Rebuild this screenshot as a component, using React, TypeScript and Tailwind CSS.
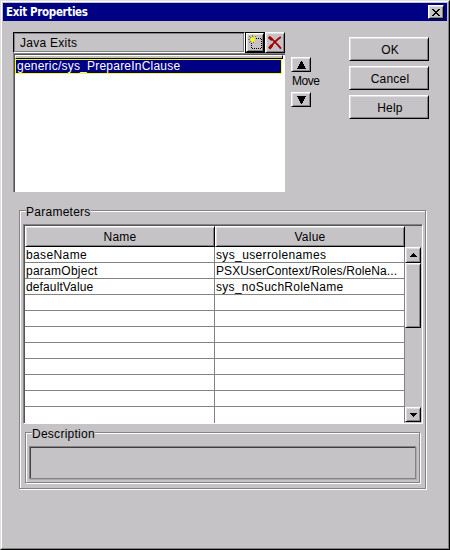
import type { ReactNode } from "react";

const raised =
  "bg-[#c6c3c6] border border-t-white border-l-white border-r-black border-b-black shadow-[inset_1px_1px_0_#dedfde,inset_-1px_-1px_0_#848284]";

const arrowRows = {
  sm: [1, 3, 5, 7],
  lg: [1, 3, 3, 5, 5, 7, 7, 9],
};

function Arrow({ down = false, size }: { down?: boolean; size: "sm" | "lg" }) {
  const widths = arrowRows[size];
  const rows = widths.length;
  const width = widths[rows - 1];
  return (
    <svg width={width} height={rows} viewBox={`0 0 ${width} ${rows}`} shapeRendering="crispEdges">
      {widths.map((w, i) => (
        <rect key={i} x={(width - w) / 2} y={down ? rows - 1 - i : i} width={w} height={1} />
      ))}
    </svg>
  );
}

function PushButton({ children }: { children: ReactNode }) {
  return (
    <button className={`${raised} flex h-6 w-20 items-center justify-center pt-[2px] pl-[2px] leading-[14px] tracking-[0.2px]`}>
      {children}
    </button>
  );
}

function Group({ title, className, children }: { title: string; className: string; children: ReactNode }) {
  return (
    <section className={`border border-[#848284] shadow-[1px_1px_0_#fff,inset_1px_1px_0_#fff] ${className}`}>
      <h2 className="-mt-[6px] ml-[6px] h-[14px] w-fit bg-[#c6c3c6] leading-[14px]">{title}</h2>
      {children}
    </section>
  );
}

const rows = [
  { name: "baseName", value: "sys_userrolenames", nameClass: "tracking-[0.38px]", valueClass: "tracking-[0.37px]" },
  { name: "paramObject", value: "PSXUserContext/Roles/RoleNa...", nameClass: "tracking-[0.26px]", valueClass: "tracking-[0.1px]" },
  { name: "defaultValue", value: "sys_noSuchRoleName", nameClass: "tracking-[0.12px]", valueClass: "tracking-[0.3px]" },
  ...Array.from({ length: 7 }, () => ({ name: "", value: "", nameClass: "", valueClass: "" })),
];

function NewIcon() {
  return (
    <svg width="15" height="15" viewBox="0 0 15 15" shapeRendering="crispEdges">
      <path d="M3.5 13.5H14M13.5 3.5V14M3.5 7.5V14M8 3.5H14" fill="none" stroke="#000" strokeDasharray="1 1" />
      <path d="M4 0h1v2H4zM1 1h1v1H1zM7 1h1v1H7zM2 2h1v1H2zM0 4h2v1H0zM2 6h1v1H2zM1 7h1v1H1zM5 7h1v1H5z" fill="#848200" />
      <path d="M4 2h1v5H4zM2 4h5v1H2zM3 3h3v3H3zM6 2h1v1H6zM7 0h1v1H7zM6 6h1v1H6z" fill="#ffff00" />
    </svg>
  );
}

function DeleteIcon() {
  return (
    <svg width="14" height="14" viewBox="0 0 14 14">
      <path d="M1 1C4 2.5 9.5 8.5 13 12.6M12.8 1C8.5 4 4 8.5 1.5 12.8" fill="none" stroke="#a50000" strokeWidth="1.9" />
      <path d="M.8 1l3.4 2.8M1.2 12.5L4.2 9" fill="none" stroke="#a50000" strokeWidth="2.8" />
    </svg>
  );
}

export default function App() {
  return (
    <main className="h-[550px] w-[450px] cursor-default overflow-hidden border border-[#dedfde] border-r-black border-b-black bg-[#c6c3c6] font-['Liberation_Sans',Arial,sans-serif] text-[12px] tracking-[0.26px] text-black">
      <div className="h-[548px] border border-t-white border-l-white border-r-[#848284] border-b-[#848284] p-px">
        <header className="flex h-[18px] items-center justify-between bg-[#000084] pr-[3px] pl-[3px]">
          <h1 className="font-['DejaVu_Sans_Condensed','DejaVu_Sans',sans-serif] text-[11.5px] leading-[18px] font-bold tracking-[-0.35px] text-white">
            Exit Properties
          </h1>
          <button className={`${raised} flex h-[14px] w-4 items-center justify-center`}>
            <svg width="8" height="7" viewBox="0 0 8 7" shapeRendering="crispEdges">
              <path d="M0 0h2v1h1v1h2V1h1V0h2v1H7v1H6v1H5v1h1v1h1v1h1v1H6V6H5V5H3v1H2v1H0V6h1V5h1V4h1V3H2V2H1V1H0z" />
            </svg>
          </button>
        </header>

        <div className="flex h-[189px] pt-[11px] pl-[10px]">
          <section className="h-[160px] w-[272px]">
            <div className="flex h-[21px]">
              <div className="h-[21px] w-[232px] border border-t-black border-l-black border-r-white border-b-white pl-[6px] leading-[20px] shadow-[inset_1px_1px_0_#848284,inset_-1px_-1px_0_#848284]">
                Java Exits
              </div>
              <button className="h-[21px] w-5 border border-black pb-px">
                <span className={`${raised} flex h-[19px] w-[18px] items-center justify-center`}><NewIcon /></span>
              </button>
              <button className={`${raised} flex h-[21px] w-5 items-center justify-center`}><DeleteIcon /></button>
            </div>
            <div className="h-[139px] border-t border-l border-[#848284] bg-white">
              <div className="h-[138px] border-t border-l border-[#525552]">
                <div className="mr-[2px] h-1 border border-t-white border-r-black border-b-black border-l-white bg-[#c6c3c6]" />
                <div className="h-[15px] w-[267px] border border-[#ffff00] bg-[#000084] pl-px leading-[13px] tracking-[0.22px] text-white">
                  generic/sys_PrepareInClause
                </div>
              </div>
            </div>
          </section>

          <div className="ml-[6px] flex w-[52px] flex-col pt-[25px]">
            <button className={`${raised} flex h-[15px] w-5 items-center justify-center pl-px`}><Arrow size="lg" /></button>
            <span className="h-5 pt-[2px] pl-px leading-[14px] tracking-[-0.5px]">Move</span>
            <button className={`${raised} flex h-[15px] w-5 items-center justify-center pl-px`}><Arrow size="lg" down /></button>
          </div>

          <div className="ml-[6px] flex flex-col gap-[5px] pt-[5px]">
            <PushButton>OK</PushButton>
            <PushButton>Cancel</PushButton>
            <PushButton>Help</PushButton>
          </div>
        </div>

        <Group title="Parameters" className="ml-4 h-[279px] w-[407px]">
          <div className="mt-[5px] ml-[3px] h-[200px] w-[400px] border border-t-[#848284] border-r-white border-b-white border-l-[#848284]">
            <div className="flex h-[198px] overflow-hidden border-t border-l border-[#525552] bg-[#c6c3c6]">
              <div className="w-[380px]">
                <div className="flex h-[21px] text-center leading-[20px]">
                  <div className={`${raised} w-[190px]`}>Name</div>
                  <div className={`${raised} w-[190px]`}>Value</div>
                </div>
                {rows.map(({ name, value, nameClass, valueClass }, i) => (
                  <div key={i} className="flex h-4 border-b border-[#848284] bg-white leading-[16px]">
                    <div className={`w-[190px] border-r border-[#848284] pl-px ${nameClass}`}>{name}</div>
                    <div className={`w-[190px] border-r border-[#848284] pl-px whitespace-nowrap ${valueClass}`}>{value}</div>
                  </div>
                ))}
                <div className="flex h-4 bg-white">
                  <div className="w-[190px] border-r border-[#848284]" />
                  <div className="w-[190px] border-r border-[#848284]" />
                </div>
              </div>
              <div className="flex w-4 flex-col pt-[21px]">
                <button className={`${raised} flex h-4 w-4 items-center justify-center`}><Arrow size="sm" /></button>
                <div className={`${raised} h-[65px]`} />
                <div className="h-[79px]" />
                <button className={`${raised} flex h-[15px] w-4 items-center justify-center`}><Arrow size="sm" down /></button>
              </div>
            </div>
          </div>

          <Group title="Description" className="mt-2 ml-[5px] h-[51px] w-[395px]">
            <div className="mt-[5px] ml-[3px] h-[33px] w-[387px] border border-[#848284] shadow-[1px_1px_0_#adaaad,inset_1px_1px_0_#424142]" />
          </Group>
        </Group>
      </div>
    </main>
  );
}
